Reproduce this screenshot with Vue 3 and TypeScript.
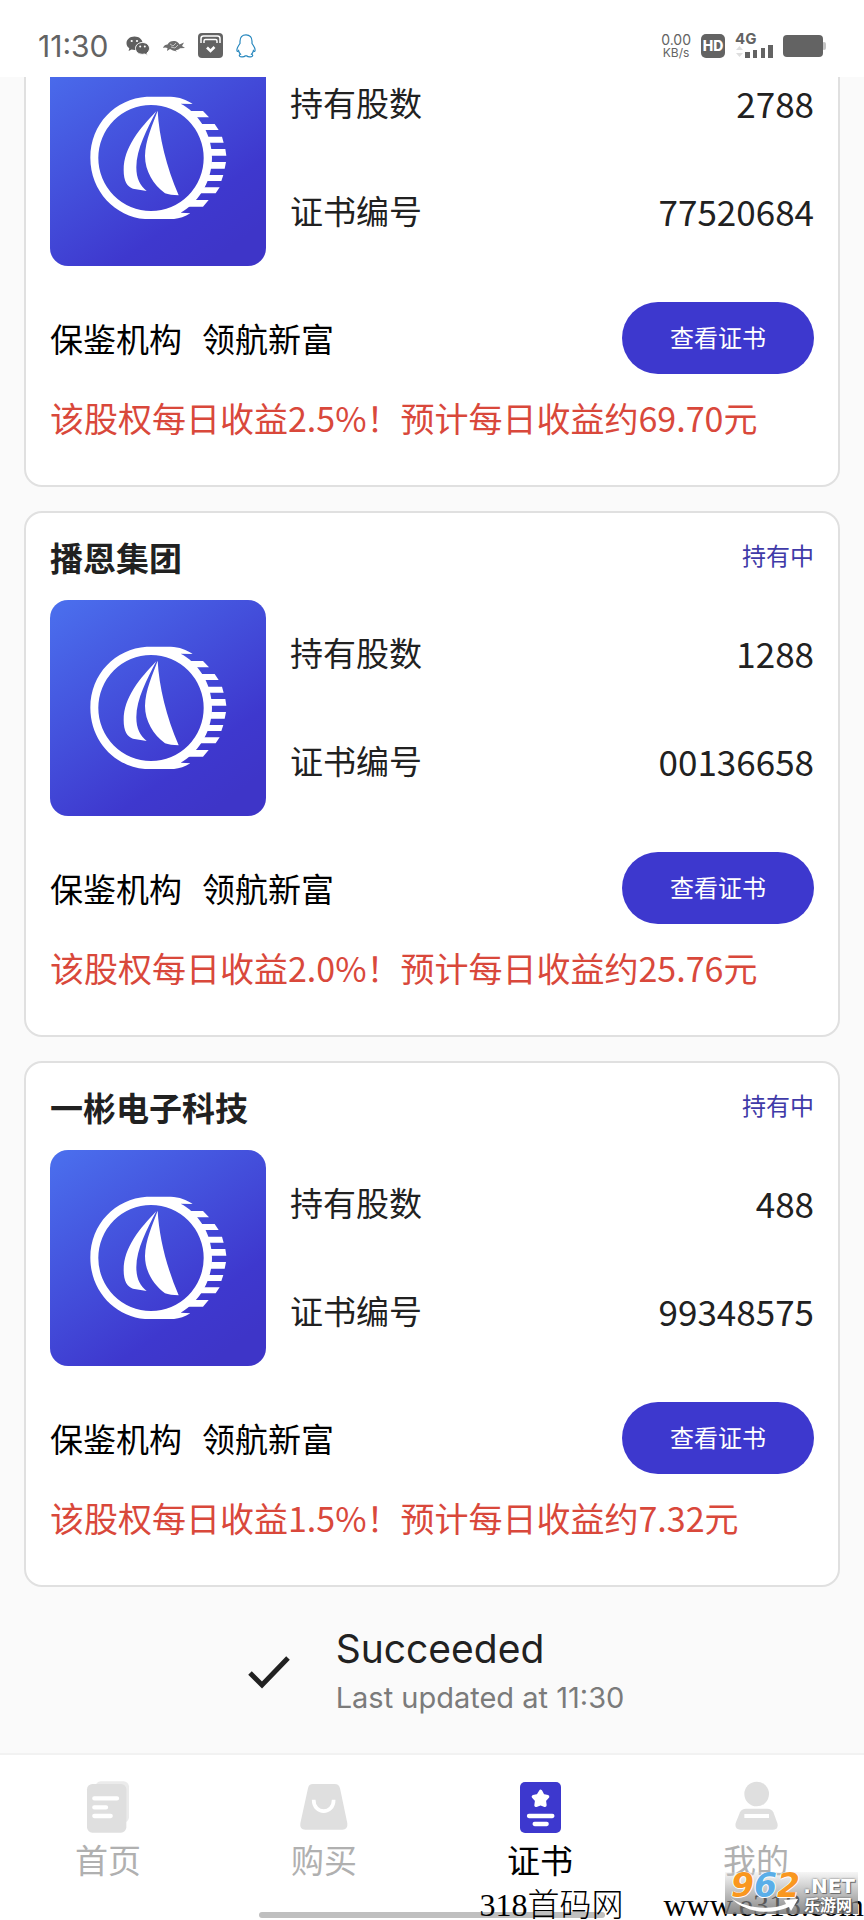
<script setup lang="ts">
interface Holding {
  name: string
  status: string
  shares: string
  serial: string
  rate: string
  daily: string
}

interface Tab {
  id: 'home' | 'buy' | 'cert' | 'mine'
  label: string
}

const agency = '领航新富'

const holdings: Holding[] = [
  { name: '', status: '', shares: '2788', serial: '77520684', rate: '2.5%', daily: '69.70' },
  { name: '播恩集团', status: '持有中', shares: '1288', serial: '00136658', rate: '2.0%', daily: '25.76' },
  { name: '一彬电子科技', status: '持有中', shares: '488', serial: '99348575', rate: '1.5%', daily: '7.32' },
]

const tabs: Tab[] = [
  { id: 'home', label: '首页' },
  { id: 'buy', label: '购买' },
  { id: 'cert', label: '证书' },
  { id: 'mine', label: '我的' },
]

const activeTab: Tab['id'] = 'cert'
</script>

<template>
  <div class="phone">
    <header class="status">
      <div class="status-side">
        <span class="clock">11:30</span>
        <svg width="24" height="20" viewBox="0 0 24 20" aria-hidden="true">
          <path fill="#5f5f5f" d="M8.5 0.5C3.9 0.5 0.5 3.4 0.5 7.2c0 2.1 1.1 3.9 2.8 5.1L2.6 15l3-1.5c.9.3 1.900.4 2.900.4C13.100 13.900 16.500 11 16.500 7.200S13.100.5 8.500.5z" />
          <path fill="#5f5f5f" stroke="#fff" stroke-width="1" d="M16.500 6.500c-4 0-7 2.600-7 5.900s3 5.900 7 5.900c.8 0 1.600-.1 2.300-.3l2.700 1.400-.6-2.300c1.600-1.100 2.600-2.800 2.600-4.700 0-3.300-3-5.900-7-5.900z" />
          <circle cx="5.700" cy="5" r="1.100" fill="#fff" /><circle cx="11" cy="5" r="1.100" fill="#fff" />
          <circle cx="14.200" cy="10.600" r="1" fill="#fff" /><circle cx="18.800" cy="10.600" r="1" fill="#fff" />
        </svg>
        <svg width="22" height="12" viewBox="0 0 22 12" aria-hidden="true">
          <path fill="#6d6d6d" d="M0 8C1 5 2.500 4.500 4.500 4.500 6 1.500 9 .5 12 1c2 .4 3.500 1.800 4.500 3.500L21 2.500 19 6l3 2-5 .2c-1.500 1.500-3 1.800-4.500 1.800l1.500 1.500-4-1-3-1.500L4 11l.5-3L2 7.500z" />
          <path fill="none" stroke="#d8d8d8" stroke-width=".8" d="M7 4l3 2 3-3M8 7l4 1 3-3" />
        </svg>
        <svg width="25" height="25" viewBox="0 0 25 25" aria-hidden="true">
          <rect width="25" height="25" rx="4" fill="#636363" />
          <path fill="none" stroke="#fff" stroke-width="1.500" d="M3 10V5.500Q3 3 5.500 3h14Q22 3 22 5.500V10M6 10V8Q6 6.500 7.500 6.500h10q1.500 0 1.500 1.500v2" />
          <path fill="none" stroke="#fff" stroke-width="2.600" d="M9 14.500l3.500 3.500 4-4" />
        </svg>
        <svg width="20" height="24" viewBox="0 0 20 24" aria-hidden="true">
          <path fill="none" stroke="#2586bd" stroke-width="1.200" d="M10 .8C6 .8 4 3.800 4 7.300v2.200C2.500 11.500.8 14 .9 16.300c.1 1.500.8 1.600 1.700.4.300 1.500.9 2.600 1.900 3.500-1.100.5-1.500 1.300-.9 2 .9 1 4.300 1 5.800-.4h1.200c1.500 1.400 4.900 1.400 5.800.4.600-.7.200-1.500-.9-2 1-.9 1.600-2 1.900-3.500.9 1.200 1.600 1.100 1.700-.4.100-2.300-1.600-4.800-3.100-6.800V7.300C16 3.800 14 .8 10 .8z" />
        </svg>
      </div>
      <div class="status-side status-right">
        <span class="speed"><b>0.00</b><small>KB/s</small></span>
        <span class="hd">HD</span>
        <span class="signal">
          <span class="net">4G</span>
          <svg width="38" height="13" viewBox="0 0 38 13" aria-hidden="true">
            <path fill="#dedede" d="M1 5l3.500-4L8 5zM1 8h7l-3.500 4z" />
            <path fill="#636363" d="M10 7h5v6h-5zM18 5h4v8h-4zM26 3h4v10h-4zM33 0h5v13h-5z" />
          </svg>
        </span>
        <svg width="44" height="22" viewBox="0 0 44 22" aria-hidden="true">
          <rect x="39" y="7" width="4" height="8" rx="2" fill="#c4c4c4" />
          <rect width="40" height="22" rx="4" fill="#636363" />
        </svg>
      </div>
    </header>

    <main class="scroller">
      <article v-for="item in holdings" :key="item.serial" class="card">
        <div class="card-head">
          <h2 v-if="item.name">{{ item.name }}</h2>
          <span v-if="item.status" class="state">{{ item.status }}</span>
        </div>
        <div class="card-body">
          <svg class="emblem" viewBox="0 0 648 648" aria-hidden="true">
            <defs>
              <linearGradient :id="`tile-${item.serial}`" x1="0" y1="0" x2=".72" y2="1">
                <stop offset="0" stop-color="#4b70ee" />
                <stop offset=".8" stop-color="#3e38ce" />
                <stop offset="1" stop-color="#3e35c8" />
              </linearGradient>
            </defs>
            <rect width="648" height="648" rx="54" :fill="`url(#tile-${item.serial})`" />
            <g fill="#fff">
              <path fill-rule="evenodd" d="M290 140H362C388 141 410 149 428 162L392 161C438 184 486 244 486 323S438 462 392 488L421 490C405 500 388 506 372 507H285C196 500 121 424 121 323S196 146 290 140ZM303 165A158 159 0 1 0 303 483A158 159 0 1 0 303 165Z" />
              <path d="M400 183H459L477 202H418ZM438 222H494L506 240H450ZM462 260H516L521 278H470ZM480 297H526L529 317H482ZM484 336H528L524 356H482ZM470 375H520L514 393H462ZM456 412H509L497 430H430ZM420 450H476L459 470H392Z" />
              <path d="M319 184C270 235 221 292 221 360C221 395 232 410 249 416L290 423C270 407 259 386 259 352C259 298 292 235 319 184Z" />
              <path d="M323 182C327 259 349 350 386 436C370 436 355 434 345 430C310 404 285 363 285 318C286 270 307 226 323 182Z" />
            </g>
          </svg>
          <dl class="facts">
            <div><dt>持有股数</dt><dd>{{ item.shares }}</dd></div>
            <div><dt>证书编号</dt><dd>{{ item.serial }}</dd></div>
          </dl>
        </div>
        <div class="card-foot">
          <p class="agency"><span>保鉴机构</span><span>{{ agency }}</span></p>
          <button type="button">查看证书</button>
        </div>
        <p class="income">该股权每日收益{{ item.rate }}！预计每日收益约{{ item.daily }}元</p>
      </article>

      <div class="refresh" role="status">
        <svg width="42" height="34" viewBox="0 0 42 34" aria-hidden="true">
          <path fill="none" stroke="#212121" stroke-width="5" d="M2 18l12 12L40 3" />
        </svg>
        <div>
          <p class="refresh-title">Succeeded</p>
          <p class="refresh-time">Last updated at 11:30</p>
        </div>
      </div>
    </main>

    <nav class="tabs">
      <a v-for="tab in tabs" :key="tab.id" href="#" :class="{ active: tab.id === activeTab }">
        <svg v-if="tab.id === 'home'" width="52" height="52" viewBox="0 0 156 156" aria-hidden="true">
          <rect x="40" y="1" width="101" height="124" rx="16" fill="#ebebeb" />
          <rect x="15" y="9" width="118" height="146" rx="16" fill="#dfdfdf" />
          <path stroke="#fff" stroke-width="13" stroke-linecap="round" d="M37 52h68M37 79h35M37 105h49" />
        </svg>
        <svg v-else-if="tab.id === 'buy'" width="52" height="52" viewBox="0 0 156 156" aria-hidden="true">
          <path fill="#dfdfdf" d="M45 9h65q13 0 16 13l22 105q2 19-15 19H22q-18 0-15-19L30 22q2-13 15-13z" />
          <path fill="none" stroke="#fff" stroke-width="11" d="M47 56c0 46 60 46 60 0" />
        </svg>
        <svg v-else-if="tab.id === 'cert'" width="52" height="52" viewBox="0 0 156 156" aria-hidden="true">
          <rect x="18" y="3" width="123" height="153" rx="15" fill="#3d38ce" />
          <path fill="#fff" stroke="#fff" stroke-width="10" stroke-linejoin="round" d="M80 31l7 13 14 3-10 11 2 15-13-5-14 5 2-15-10-11 14-3z" />
          <path stroke="#fff" stroke-width="13" stroke-linecap="round" d="M45 105h70M62 129h36" />
        </svg>
        <svg v-else width="52" height="52" viewBox="0 0 156 156" aria-hidden="true">
          <circle cx="80" cy="39" r="37" fill="#dfdfdf" />
          <path fill="#dfdfdf" d="M48 83h64q13 0 18 11l12 32q5 20-14 20H32q-19 0-15-20l13-32q5-11 18-11z" />
          <path stroke="#fff" stroke-width="12" d="M43 105h74" />
        </svg>
        <span>{{ tab.label }}</span>
      </a>
      <i class="home-bar"></i>
      <p class="site-mark"><span>318首码网</span><span>www.e318.com</span></p>
      <div class="badge">
        <strong>9<span class="blue">6</span>2</strong>
        <em>.NET</em>
        <b>乐游网</b>
        <svg viewBox="0 0 70 16" aria-hidden="true">
          <path fill="#fff" d="M0 1C14 11 38 14 55 7L53 3 67 2 60 14 58 10C38 19 13 15 0 1Z" />
        </svg>
      </div>
    </nav>
  </div>
</template>

<style>
body {
  margin: 0;
  background: #fafafa;
}
</style>

<style scoped>
.phone {
  display: flex;
  flex-direction: column;
  height: 100vh;
  overflow: hidden;
  background: #fafafa;
  color: #212121;
  font-family: "Noto Sans CJK SC", sans-serif;
}

p,
h2,
dl,
dd {
  margin: 0;
}

svg {
  display: block;
  flex: none;
}

.status {
  display: flex;
  flex: none;
  align-items: center;
  justify-content: space-between;
  box-sizing: border-box;
  height: 77px;
  padding: 14px 37px 0 38px;
  background: #fff;
  color: #636363;
  font-family: Inter, sans-serif;
}

.status-side {
  display: flex;
  align-items: center;
  gap: 13px;
}

.status-right {
  gap: 10px;
}

.clock {
  margin-right: 4px;
  font-size: 30px;
  line-height: 32px;
}

.speed {
  display: grid;
  justify-items: center;
  line-height: 13px;
}

.speed b {
  font-size: 14px;
  font-weight: 400;
}

.speed small {
  font-size: 12px;
}

.hd {
  width: 24px;
  border-radius: 5px;
  background: #636363;
  color: #fff;
  font-size: 14px;
  font-weight: 800;
  line-height: 24px;
  text-align: center;
}

.signal {
  display: grid;
}

.net {
  font-size: 15px;
  font-weight: 700;
  line-height: 12px;
}

.scroller {
  display: flex;
  flex: 1;
  flex-direction: column;
  justify-content: flex-end;
  gap: 24px;
  min-height: 0;
  padding: 0 24px;
  overflow: hidden;
}

.card {
  flex: none;
  padding: 24px 24px 45px;
  border: 2px solid #e0e0e0;
  border-radius: 18px;
  background: #fff;
}

.card-head {
  display: flex;
  align-items: center;
  justify-content: space-between;
  min-height: 40px;
  margin-bottom: 23px;
}

h2 {
  font-size: 33px;
  font-weight: 700;
  line-height: 40px;
}

.state {
  padding-bottom: 4px;
  color: #3f3aa8;
  font-size: 24px;
  line-height: 36px;
}

.card-body {
  display: flex;
  gap: 24px;
}

.emblem {
  width: 216px;
  height: 216px;
}

.facts {
  display: grid;
  flex: 1;
  grid-template-rows: 1fr 1fr;
}

.facts div {
  display: flex;
  align-items: center;
  justify-content: space-between;
  padding-bottom: 4px;
}

.facts dt {
  font-size: 33px;
}

.facts dd {
  font-size: 35px;
}

.card-foot {
  display: flex;
  align-items: center;
  justify-content: space-between;
  margin-top: 36px;
}

.agency {
  display: flex;
  gap: 20px;
  color: #000;
  font-size: 33px;
  line-height: 44px;
}

button {
  width: 192px;
  height: 72px;
  padding: 0 0 4px;
  border: 0;
  border-radius: 36px;
  background: #3d38ce;
  color: #fff;
  font-family: inherit;
  font-size: 24px;
}

.income {
  margin-top: 22px;
  color: #d9483b;
  font-size: 34px;
  line-height: 44px;
  white-space: nowrap;
}

.refresh {
  display: flex;
  flex: none;
  align-items: center;
  justify-content: center;
  gap: 46px;
  padding: 14px 0 34px 8px;
  font-family: Inter, sans-serif;
}

.refresh-title {
  font-size: 39px;
  line-height: 48px;
}

.refresh-time {
  margin-top: 4px;
  color: #7b7b7b;
  font-size: 29px;
  line-height: 42px;
}

.tabs {
  position: relative;
  display: grid;
  flex: none;
  grid-template-columns: repeat(4, 1fr);
  padding: 26px 0 41px;
  border-top: 2px solid #f2f2f2;
  background: #fff;
}

.tabs a {
  display: flex;
  flex-direction: column;
  align-items: center;
  gap: 6px;
  color: #b0b0b0;
  font-size: 33px;
  line-height: 40px;
  text-decoration: none;
}

.tabs a.active {
  color: #000;
}

.home-bar {
  position: absolute;
  bottom: 2px;
  left: 30%;
  width: 40%;
  height: 6px;
  border-radius: 3px;
  background: #bfbfbf;
}

.site-mark {
  position: absolute;
  right: 0;
  bottom: -5px;
  display: flex;
  gap: 40px;
  color: #000;
  font-family: "Liberation Serif", "Noto Sans CJK SC", serif;
  font-size: 32px;
  font-weight: 300;
  line-height: 40px;
  white-space: nowrap;
}

.badge {
  position: absolute;
  right: 6px;
  bottom: 6px;
  width: 133px;
  height: 42px;
  background: linear-gradient(rgba(225, 225, 225, 0.3), rgba(115, 115, 115, 0.85));
  color: #fff;
  font-family: "DejaVu Sans", "Noto Sans CJK SC", sans-serif;
}

.badge strong,
.badge em,
.badge b,
.badge svg {
  position: absolute;
}

.badge strong {
  top: 0;
  left: 6px;
  color: #f9971f;
  font-size: 33px;
  font-style: italic;
  line-height: 28px;
  text-shadow: 1px 0 #fff, -1px 0 #fff, 0 1px #fff;
}

.badge .blue {
  color: #5aaee8;
}

.badge em {
  top: 5px;
  right: 3px;
  font-size: 20px;
  font-style: normal;
  font-weight: 700;
  line-height: 18px;
  text-shadow: 0 0 2px #555, 1px 1px #777;
}

.badge b {
  right: 6px;
  bottom: 1px;
  font-family: "Noto Sans CJK SC", sans-serif;
  font-size: 16px;
  line-height: 18px;
  text-shadow: 0 0 2px #444, 1px 1px #666;
}

.badge svg {
  bottom: 1px;
  left: 6px;
  width: 70px;
  height: 16px;
}
</style>
